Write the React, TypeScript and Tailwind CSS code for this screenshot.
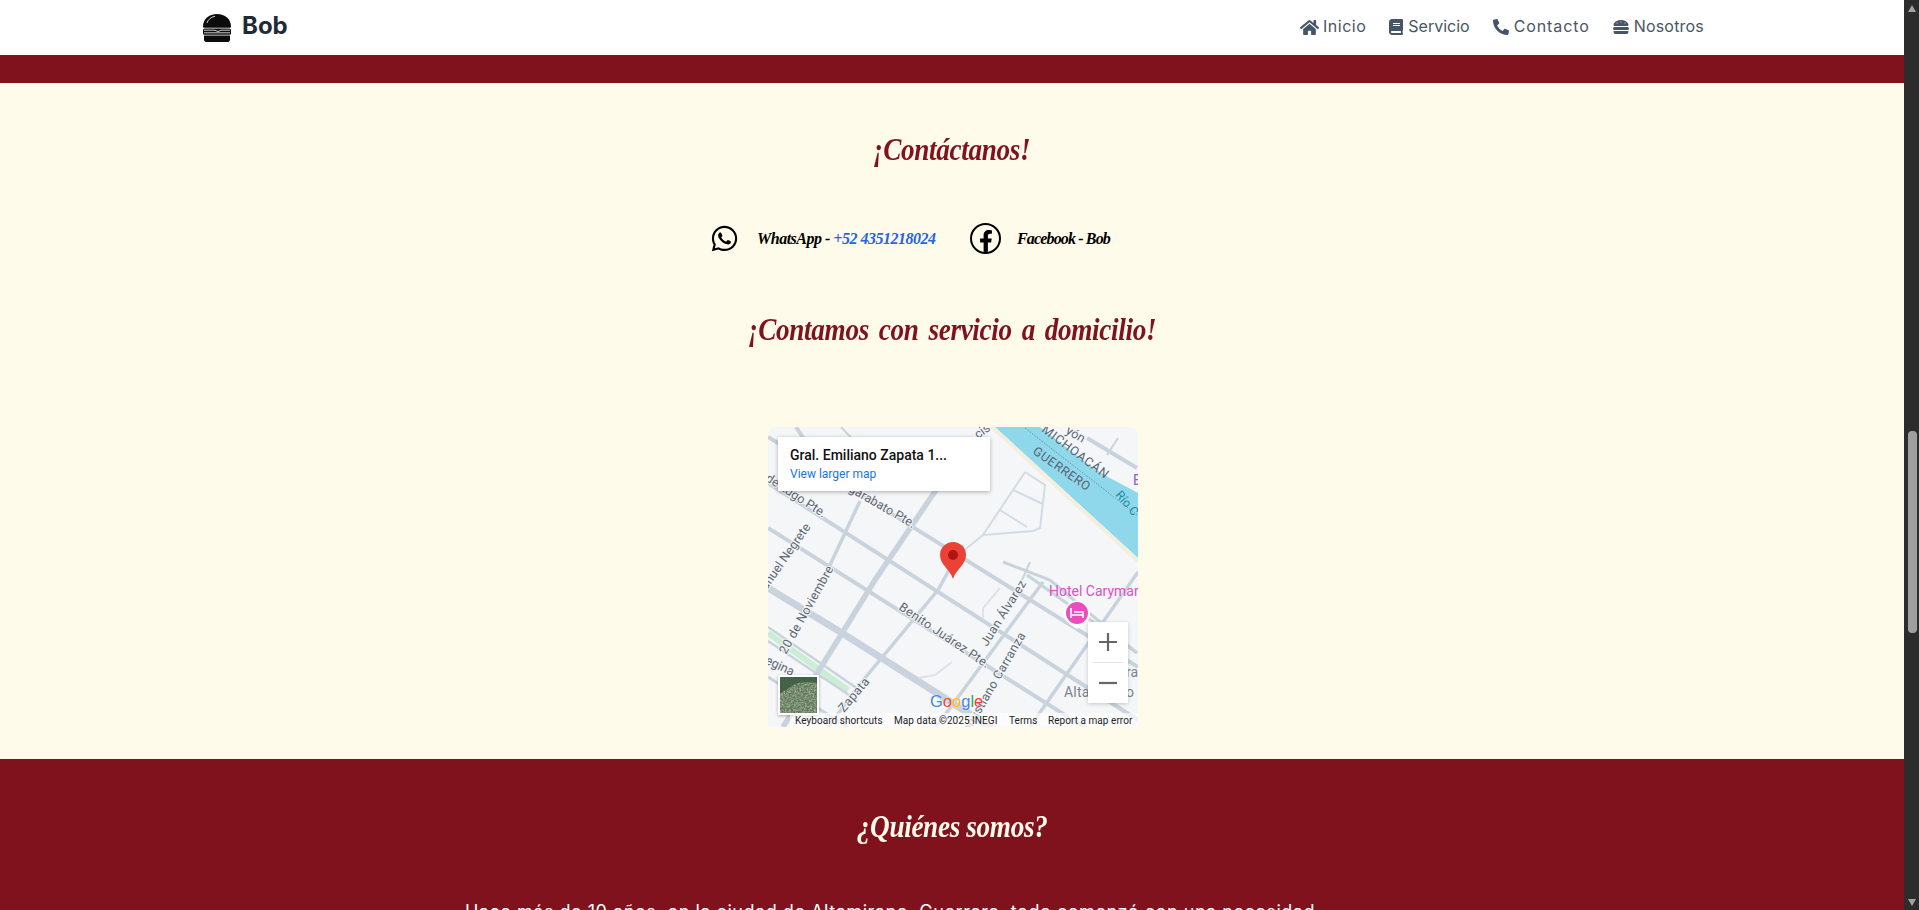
import { FaHome, FaBook, FaPhoneAlt, FaHamburger, FaWhatsapp, FaFacebookF } from "react-icons/fa";

const script = "[font-family:'Liberation_Serif',serif] italic font-bold";

function BurgerLogo() {
  return (
    <svg viewBox="0 0 32 32" className="w-8 h-8 shrink-0">
      <path d="M3 14.5C3 7 9 2 17 2s14 5 14 12.5c0 .8-.5 1.2-1.2 1.2H4.2C3.5 15.7 3 15.3 3 14.5Z" fill="#0b0b0b" />
      <path d="M7 11C8 7.5 11 5 15 4.3" fill="none" stroke="#fff" strokeWidth="0.8" />
      <rect x="3" y="16.6" width="28" height="6.2" rx="1.6" fill="#0b0b0b" />
      <path d="M4 18.2h11l3 1.4 3-1.4h9" fill="none" stroke="#fff" strokeWidth="0.8" />
      <path d="M4 20.8h26" fill="none" stroke="#fff" strokeWidth="0.8" />
      <path d="M4 23.6h26v3.6a2.8 2.8 0 0 1-2.8 2.8H6.8A2.8 2.8 0 0 1 4 27.2Z" fill="#0b0b0b" />
    </svg>
  );
}

function NavItem({ icon, label, gap, track }: { icon: React.ReactNode; label: string; gap: string; track: string }) {
  return (
    <a className={`flex items-center ${gap} text-[#4b5563] text-base`}>
      <span className="text-[#475569] flex items-center mt-[2px]">{icon}</span>
      <span className={track}>{label}</span>
    </a>
  );
}

const road = "#c9d3de";

function MapCanvas() {
  const lab = { fontFamily: "Roboto, sans-serif", fontSize: 12.5, fill: "#5d6875", stroke: "#f5f6f7", strokeWidth: 2, paintOrder: "stroke" } as const;
  const water = { fontFamily: "Roboto, sans-serif", fontSize: 12.5, fill: "#5a6672" } as const;
  return (
    <svg viewBox="0 0 370 300" className="block w-[370px] h-[300px]">
      <rect width="370" height="300" fill="#f5f6f7" />
      {/* river */}
      <path d="M227 0L370 131V66L340 50L325 41L272 0Z" fill="#8fd8ec" />
      <path d="M224 0L370 134" stroke="#f3eedd" strokeWidth="4" fill="none" />
      <path d="M257 1L369 88" stroke="#5f7480" strokeWidth="0.7" strokeDasharray="1.5 1.5" fill="none" />
      {/* green strip */}
      <path d="M0 206L80 263" stroke="#c9eed3" strokeWidth="6" fill="none" />
      <g stroke={road} fill="none" strokeLinecap="butt">
        <path d="M0 10L370 240" strokeWidth="4" />
        <path d="M0 56L370 293" strokeWidth="4" />
        <path d="M0 101L370 334" strokeWidth="4" />
        <path d="M0 161L74 206L164 263L230 305" strokeWidth="7" />
        <path d="M0 200L90 262" strokeWidth="2.5" />
        <path d="M0 214L84 270" strokeWidth="2.5" />
        <path d="M0 250L80 300" strokeWidth="3" />
        <path d="M235 135L282 153L369 226" strokeWidth="3" />
        <path d="M259 148L369 226" strokeWidth="3" />
        <path d="M319 11L369 41" strokeWidth="4" />
        <path d="M350 11L339 28" strokeWidth="2" />
        <path d="M262 135L254 153" strokeWidth="2" />
        <path d="M92 74L62 138L45 170" strokeWidth="3.5" />
        <path d="M170 60L107 153L50 245L15 300" strokeWidth="5.5" />
        <path d="M195 118L170 163L97 251L60 300" strokeWidth="3.5" />
        <path d="M275 155L182 281L168 300" strokeWidth="3.5" />
        <path d="M370 145L275 281L262 300" strokeWidth="3.5" />
        <path d="M28 0L48 30" strokeWidth="4" />
        <path d="M73 0L92 20" strokeWidth="2" />
        <path d="M257 45L277 58L272 101L265 104L215 108L199 121L188 135" strokeWidth="2" stroke="#d3dbe4" />
        <path d="M245 63L275 77M232 83L259 100M257 45L215 108" strokeWidth="2" stroke="#d3dbe4" />
        <path d="M232 161L215 181V191M184 235L167 248L150 251" strokeWidth="2" stroke="#dde2e8" />
      </g>
      {/* labels */}
      <g style={lab}>
        <text transform="translate(80 64) rotate(30)">garabato Pte.</text>
        <text transform="translate(55 91) rotate(33)" textAnchor="end">de Lugo Pte.</text>
        <text transform="translate(43 100) rotate(-55)" textAnchor="end">Manuel Negrete</text>
        <text transform="translate(18 228) rotate(-61)" letterSpacing="0.3">20 de Noviembre</text>
        <text transform="translate(24 249) rotate(25)" textAnchor="end">Regina</text>
        <text transform="translate(76 286) rotate(-50)" letterSpacing="0.3">Zapata</text>
        <text transform="translate(130 182) rotate(34)" letterSpacing="0.3">Benito Juárez Pte.</text>
        <text transform="translate(219 220) rotate(-58)" letterSpacing="0.3">Juan Álvarez</text>
        <text transform="translate(258 208) rotate(-60)" textAnchor="end" letterSpacing="0.3">Venustiano Carranza</text>
        <text transform="translate(297 6) rotate(30)">yón</text>
        <text transform="translate(210 12) rotate(-35)">cis</text>
      </g>
      <g style={water}>
        <text transform="translate(273 4) rotate(37)" letterSpacing="0.8">MICHOACÁN</text>
        <text transform="translate(264 26) rotate(35)" letterSpacing="0.6">GUERRERO</text>
      </g>
      <text transform="translate(347 68) rotate(50)" fontFamily="Roboto, sans-serif" fontSize="12" fill="#1b8ba3">Río C</text>
      <text x="365" y="58" fontFamily="Roboto, sans-serif" fontSize="14" fill="#8a63c9">E</text>
      <text x="296" y="270" fontFamily="Roboto, sans-serif" fontSize="14" fill="#7a8390" letterSpacing="0.2">Altamirano G</text>
      <text x="358" y="250" fontFamily="Roboto, sans-serif" fontSize="14" fill="#7a8390">ra</text>
      <text x="281" y="169" fontFamily="Roboto, sans-serif" fontSize="14" fill="#e24ec4">Hotel Carymar</text>
      {/* hotel pin */}
      <path d="M309 202l-6-4a13 13 0 1 1 12 0Z" fill="#fff" />
      <circle cx="309" cy="186" r="11" fill="#ec4dbd" />
      <path d="M303 181v10M303 188h12v3M306 185h9v3" stroke="#fff" strokeWidth="1.6" fill="none" />
      {/* main pin */}
      <path d="M185 152C182 142 172 138 172 128a13 13 0 0 1 26 0C198 138 188 142 185 152Z" fill="#ea4335" />
      <circle cx="185" cy="128" r="5" fill="#b31412" />
      {/* google logo */}
      <text x="162" y="280" fontFamily="'Liberation Sans', sans-serif" fontSize="16.5" stroke="#fff" strokeWidth="0.4" paintOrder="stroke">
        <tspan fill="#4285f4">G</tspan>
        <tspan fill="#ea4335">o</tspan>
        <tspan fill="#fbbc05">o</tspan>
        <tspan fill="#4285f4">g</tspan>
        <tspan fill="#34a853">l</tspan>
        <tspan fill="#ea4335">e</tspan>
      </text>
    </svg>
  );
}

function Satellite() {
  return (
    <svg viewBox="0 0 37 36" className="block w-full h-full">
      <defs>
        <filter id="sat" x="0" y="0" width="100%" height="100%">
          <feTurbulence type="fractalNoise" baseFrequency="0.55" numOctaves="2" seed="4" />
          <feColorMatrix values="0 0 0 0 0.82  0 0 0 0 0.86  0 0 0 0 0.76  1.6 0 0 0 -0.55" />
        </filter>
      </defs>
      <rect width="37" height="36" fill="#5f7757" />
      <rect width="37" height="36" filter="url(#sat)" opacity="0.7" />
      <path d="M0 0H37V6C25 4 15 5 8 12L0 16Z" fill="#3a5c40" opacity="0.85" />
    </svg>
  );
}

function GoogleMap() {
  return (
    <div className="relative w-[370px] h-[300px] rounded-t-lg overflow-hidden font-['Roboto',sans-serif]">
      <MapCanvas />
      <div className="absolute left-[10px] top-[10px] w-[212px] h-[54px] bg-white shadow-[0_1px_4px_rgba(0,0,0,0.3)] pl-3 pt-[10px]">
        <div className="text-[14px] leading-4 font-medium text-[#111]">Gral. Emiliano Zapata 1...</div>
        <div className="text-[12px] leading-4 mt-[3px] text-[#1a73e8]">View larger map</div>
      </div>
      <div className="absolute left-[320px] top-[195px] w-10 h-[81px] bg-white shadow-[0_1px_4px_rgba(0,0,0,0.2)] flex flex-col items-center">
        <div className="h-10 w-full flex items-center justify-center">
          <svg viewBox="0 0 18 18" className="w-[18px] h-[18px]"><path d="M9 0v18M0 9h18" stroke="#666" strokeWidth="2.2" /></svg>
        </div>
        <div className="h-px w-[30px] bg-[#e6e6e6]" />
        <div className="h-10 w-full flex items-center justify-center">
          <svg viewBox="0 0 18 18" className="w-[18px] h-[18px]"><path d="M0 9h18" stroke="#666" strokeWidth="2.2" /></svg>
        </div>
      </div>
      <div className="absolute left-[10px] top-[248px] w-[41px] h-10 border-2 border-white shadow-[0_1px_3px_rgba(0,0,0,0.3)]">
        <Satellite />
      </div>
      <div className="absolute left-[22px] right-0 bottom-0 h-[14px] bg-white/65 flex items-center text-[10px] text-[#222] tracking-[0.05px] whitespace-nowrap">
        <span className="ml-[5px] w-[99px]">Keyboard shortcuts</span>
        <span className="w-[115px]">Map data ©2025 INEGI</span>
        <span className="w-[39px]">Terms</span>
        <span>Report a map error</span>
      </div>
    </div>
  );
}

export default function App() {
  return (
    <div className="flex h-[910px] w-full overflow-hidden font-['Inter',sans-serif]">
      <main className="flex-1 min-w-0 flex flex-col overflow-hidden">
        <header className="h-[55px] bg-white shrink-0">
          <div className="mx-auto max-w-[1536px] h-full px-4 flex items-center justify-between">
            <div className="flex items-center gap-[10px]">
              <BurgerLogo />
              <span className="text-2xl font-bold text-[#1f2937] mb-[3px]">Bob</span>
            </div>
            <nav className="flex items-center gap-[23px] mb-[3px]">
              <NavItem icon={<FaHome className="w-[19px] h-[19px]" />} label="Inicio" gap="gap-1" track="tracking-[0.5px]" />
              <NavItem icon={<FaBook className="w-[14px] h-4" />} label="Servicio" gap="gap-[5px]" track="tracking-[0px]" />
              <NavItem icon={<FaPhoneAlt className="w-4 h-4" />} label="Contacto" gap="gap-[5px]" track="tracking-[0.9px]" />
              <NavItem icon={<FaHamburger className="w-4 h-4" />} label="Nosotros" gap="gap-[5px]" track="tracking-[0.2px]" />
            </nav>
          </div>
        </header>
        <div className="h-7 bg-[#7f121d] shrink-0" />
        <section className="h-[676px] shrink-0 bg-[#fffbeb] flex flex-col items-center pt-[48px]">
          <h2 className={`${script} text-[32px] leading-9 tracking-[-0.4px] scale-x-[0.85] text-[#7f121d]`}>¡Contáctanos!</h2>
          <div className="mt-[56px] mr-[84px] w-[400px] flex items-center text-black">
            <FaWhatsapp className="w-[29px] h-[29px] shrink-0" />
            <span className={`${script} ml-[18px] w-[213px] shrink-0 text-[16px] tracking-[-0.5px] whitespace-nowrap`}>
              WhatsApp - <span className="text-[#2563eb]">+52 4351218024</span>
            </span>
            <span className="w-[31px] h-[31px] shrink-0 rounded-full border-2 border-black flex items-end justify-center overflow-hidden">
              <FaFacebookF className="w-[16px] h-[22px]" />
            </span>
            <span className={`${script} ml-4 text-[16px] tracking-[-0.85px] whitespace-nowrap`}>Facebook - Bob</span>
          </div>
          <h2 className={`${script} mt-[57px] text-[32px] leading-9 tracking-[-0.4px] [word-spacing:4px] scale-x-[0.85] text-[#7f121d]`}>¡Contamos con servicio a domicilio!</h2>
          <div className="mt-[80px] ml-[2px]">
            <GoogleMap />
          </div>
        </section>
        <section className="flex-1 bg-[#7f121d] flex flex-col items-center pt-[49px] overflow-hidden">
          <h2 className={`${script} text-[32px] leading-9 tracking-[-0.4px] scale-x-[0.85] text-[#fffbeb]`}>¿Quiénes somos?</h2>
          <p className="mt-[54px] mr-[124px] text-[18px] leading-7 tracking-[0.54px] text-white whitespace-nowrap">
            Hace más de 10 años, en la ciudad de Altamirano, Guerrero, todo comenzó con una necesidad
          </p>
        </section>
      </main>
      <aside className="w-[15px] shrink-0 bg-[#2c2c2c] flex flex-col items-center pl-[1px]">
        <svg viewBox="0 0 8 7" className="w-2 h-[7px] mt-[5px] shrink-0"><path d="M4 0L8 7H0Z" fill="#a3a3a3" /></svg>
        <div className="w-[9px] h-[202px] mt-[419px] rounded-[4px] bg-[#9f9f9f]" />
        <svg viewBox="0 0 8 7" className="w-2 h-[7px] mt-auto mb-1 shrink-0"><path d="M0 0H8L4 7Z" fill="#a3a3a3" /></svg>
      </aside>
    </div>
  );
}
